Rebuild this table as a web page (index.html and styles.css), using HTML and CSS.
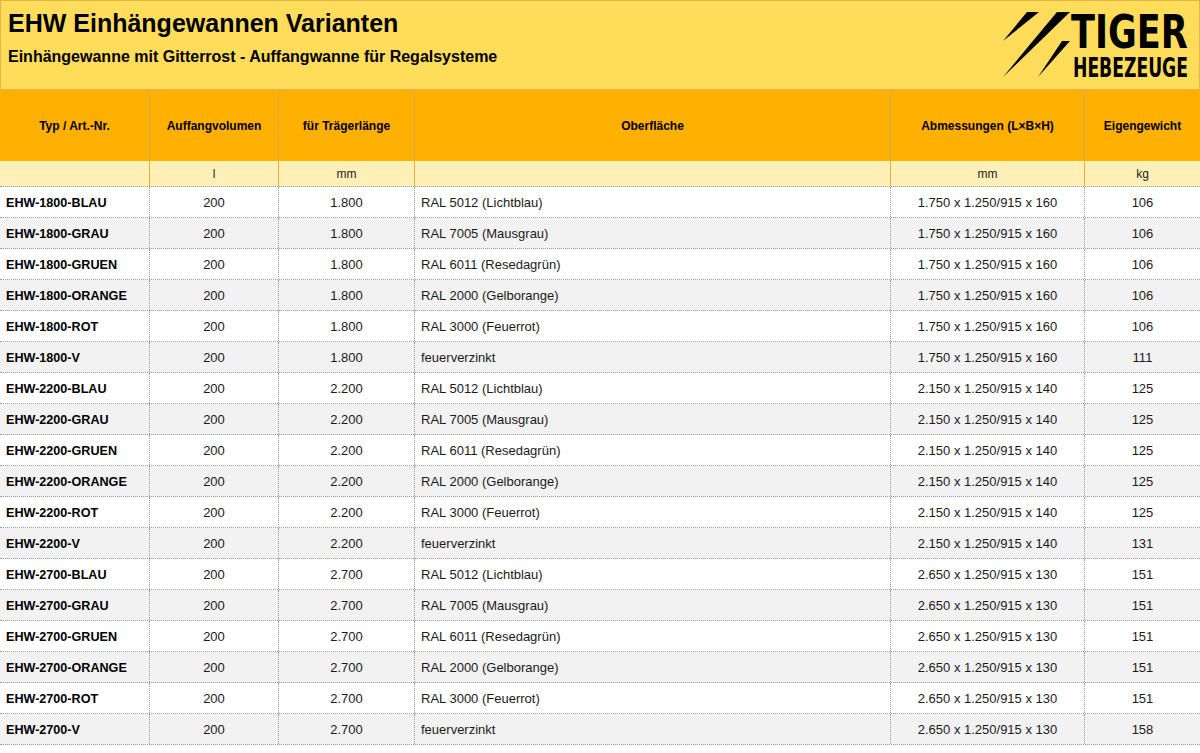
FILE: index.html
```html
<!DOCTYPE html>
<html lang="de">
<head>
<meta charset="utf-8">
<title>EHW Einhängewannen Varianten</title>
<link rel="stylesheet" href="styles.css">
</head>
<body>
<div class="sheet">
  <header class="banner">
    <div class="titles">
      <h1 class="title">EHW Einhängewannen Varianten</h1>
      <p class="subtitle">Einhängewanne mit Gitterrost - Auffangwanne für Regalsysteme</p>
    </div>
    <svg class="logo" width="192" height="86" viewBox="0 0 192 86" aria-label="Tiger Hebezeuge">
      <polygon points="27,11 39,11 3,40" fill="#000"/>
      <polygon points="57,11 70,11 3,76" fill="#000"/>
      <polygon points="62,40 70,40 38,76" fill="#000"/>
      <text class="logo-big" transform="translate(71 47) scale(0.83 1)" x="0" y="0">TIGER</text>
      <text class="logo-small" transform="translate(73 76) scale(0.735 1)" x="0" y="0">HEBEZEUGE</text>
    </svg>
  </header>

  <div class="table">
    <div class="row head">
      <div class="cell">Typ / Art.-Nr.</div>
      <div class="cell">Auffangvolumen</div>
      <div class="cell">für Trägerlänge</div>
      <div class="cell">Oberfläche</div>
      <div class="cell">Abmessungen (L×B×H)</div>
      <div class="cell">Eigengewicht</div>
    </div>
    <div class="row units">
      <div class="cell"></div>
      <div class="cell">l</div>
      <div class="cell">mm</div>
      <div class="cell"></div>
      <div class="cell">mm</div>
      <div class="cell">kg</div>
    </div>

    <div class="row data"><div class="cell id">EHW-1800-BLAU</div><div class="cell">200</div><div class="cell">1.800</div><div class="cell txt">RAL 5012 (Lichtblau)</div><div class="cell">1.750 x 1.250/915 x 160</div><div class="cell">106</div></div>
    <div class="row data"><div class="cell id">EHW-1800-GRAU</div><div class="cell">200</div><div class="cell">1.800</div><div class="cell txt">RAL 7005 (Mausgrau)</div><div class="cell">1.750 x 1.250/915 x 160</div><div class="cell">106</div></div>
    <div class="row data"><div class="cell id">EHW-1800-GRUEN</div><div class="cell">200</div><div class="cell">1.800</div><div class="cell txt">RAL 6011 (Resedagrün)</div><div class="cell">1.750 x 1.250/915 x 160</div><div class="cell">106</div></div>
    <div class="row data"><div class="cell id">EHW-1800-ORANGE</div><div class="cell">200</div><div class="cell">1.800</div><div class="cell txt">RAL 2000 (Gelborange)</div><div class="cell">1.750 x 1.250/915 x 160</div><div class="cell">106</div></div>
    <div class="row data"><div class="cell id">EHW-1800-ROT</div><div class="cell">200</div><div class="cell">1.800</div><div class="cell txt">RAL 3000 (Feuerrot)</div><div class="cell">1.750 x 1.250/915 x 160</div><div class="cell">106</div></div>
    <div class="row data"><div class="cell id">EHW-1800-V</div><div class="cell">200</div><div class="cell">1.800</div><div class="cell txt">feuerverzinkt</div><div class="cell">1.750 x 1.250/915 x 160</div><div class="cell">111</div></div>

    <div class="row data"><div class="cell id">EHW-2200-BLAU</div><div class="cell">200</div><div class="cell">2.200</div><div class="cell txt">RAL 5012 (Lichtblau)</div><div class="cell">2.150 x 1.250/915 x 140</div><div class="cell">125</div></div>
    <div class="row data"><div class="cell id">EHW-2200-GRAU</div><div class="cell">200</div><div class="cell">2.200</div><div class="cell txt">RAL 7005 (Mausgrau)</div><div class="cell">2.150 x 1.250/915 x 140</div><div class="cell">125</div></div>
    <div class="row data"><div class="cell id">EHW-2200-GRUEN</div><div class="cell">200</div><div class="cell">2.200</div><div class="cell txt">RAL 6011 (Resedagrün)</div><div class="cell">2.150 x 1.250/915 x 140</div><div class="cell">125</div></div>
    <div class="row data"><div class="cell id">EHW-2200-ORANGE</div><div class="cell">200</div><div class="cell">2.200</div><div class="cell txt">RAL 2000 (Gelborange)</div><div class="cell">2.150 x 1.250/915 x 140</div><div class="cell">125</div></div>
    <div class="row data"><div class="cell id">EHW-2200-ROT</div><div class="cell">200</div><div class="cell">2.200</div><div class="cell txt">RAL 3000 (Feuerrot)</div><div class="cell">2.150 x 1.250/915 x 140</div><div class="cell">125</div></div>
    <div class="row data"><div class="cell id">EHW-2200-V</div><div class="cell">200</div><div class="cell">2.200</div><div class="cell txt">feuerverzinkt</div><div class="cell">2.150 x 1.250/915 x 140</div><div class="cell">131</div></div>

    <div class="row data"><div class="cell id">EHW-2700-BLAU</div><div class="cell">200</div><div class="cell">2.700</div><div class="cell txt">RAL 5012 (Lichtblau)</div><div class="cell">2.650 x 1.250/915 x 130</div><div class="cell">151</div></div>
    <div class="row data"><div class="cell id">EHW-2700-GRAU</div><div class="cell">200</div><div class="cell">2.700</div><div class="cell txt">RAL 7005 (Mausgrau)</div><div class="cell">2.650 x 1.250/915 x 130</div><div class="cell">151</div></div>
    <div class="row data"><div class="cell id">EHW-2700-GRUEN</div><div class="cell">200</div><div class="cell">2.700</div><div class="cell txt">RAL 6011 (Resedagrün)</div><div class="cell">2.650 x 1.250/915 x 130</div><div class="cell">151</div></div>
    <div class="row data"><div class="cell id">EHW-2700-ORANGE</div><div class="cell">200</div><div class="cell">2.700</div><div class="cell txt">RAL 2000 (Gelborange)</div><div class="cell">2.650 x 1.250/915 x 130</div><div class="cell">151</div></div>
    <div class="row data"><div class="cell id">EHW-2700-ROT</div><div class="cell">200</div><div class="cell">2.700</div><div class="cell txt">RAL 3000 (Feuerrot)</div><div class="cell">2.650 x 1.250/915 x 130</div><div class="cell">151</div></div>
    <div class="row data"><div class="cell id">EHW-2700-V</div><div class="cell">200</div><div class="cell">2.700</div><div class="cell txt">feuerverzinkt</div><div class="cell">2.650 x 1.250/915 x 130</div><div class="cell">158</div></div>
  </div>
</div>
</body>
</html>
```

FILE: styles.css
```css
html, body {
  margin: 0;
  padding: 0;
  background: #ffffff;
}

body {
  font-family: "Liberation Sans", Arial, sans-serif;
  color: #111111;
}

.sheet {
  width: 1200px;
}

/* ---------- banner ---------- */
.banner {
  box-sizing: border-box;
  height: 90px;
  background: #ffdc5a;
  border: 1px solid #e2b447;
  display: flex;
  justify-content: space-between;
  align-items: flex-start;
  padding: 7px 7px 0 7px;
}

.titles {
  display: flex;
  flex-direction: column;
}

.title {
  margin: 0;
  font-size: 25px;
  line-height: 30px;
  font-weight: bold;
  color: #000;
}

.subtitle {
  margin: 9px 0 0 0;
  font-size: 16px;
  line-height: 20px;
  font-weight: bold;
  color: #000;
}

.logo {
  display: block;
  margin-top: -7px;
  overflow: visible;
}

.logo-big,
.logo-small {
  font-family: "DejaVu Sans Condensed", "DejaVu Sans", sans-serif;
  font-weight: bold;
  fill: #000;
}

.logo-big {
  font-size: 47px;
}

.logo-small {
  font-size: 26px;
}

/* ---------- table ---------- */
.table {
  display: flex;
  flex-direction: column;
}

.row {
  box-sizing: border-box;
  display: grid;
  grid-template-columns: 150px 129px 136px 476px 194px 115px;
}

.cell {
  box-sizing: border-box;
  display: flex;
  align-items: center;
  justify-content: center;
  white-space: nowrap;
  overflow: hidden;
}

.head {
  height: 71px;
  background: #ffb000;
}

.head .cell {
  font-size: 12px;
  font-weight: bold;
  color: #000;
  border-right: 1px solid #d9a94f;
}

.units {
  height: 26px;
  background: #fff0b8;
  border-bottom: 1px dotted #9a9a9a;
}

.units .cell {
  font-size: 12px;
  color: #222;
  border-right: 1px solid #e9ad2c;
}

.head .cell:last-child,
.units .cell:last-child,
.data .cell:last-child {
  border-right: none;
}

.data {
  height: 31px;
  border-bottom: 1px dotted #9a9a9a;
  background: #ffffff;
}

.data:nth-child(even) {
  background: #f2f2f2;
}

.data .cell {
  font-size: 13px;
  color: #1a1a1a;
  border-right: 1px dotted #9a9a9a;
  padding-top: 1px;
}

.data .cell.id {
  justify-content: flex-start;
  padding-left: 6px;
  padding-top: 2px;
  font-weight: bold;
  font-size: 12.6px;
  color: #000;
}

.data .cell.txt {
  justify-content: flex-start;
  padding-left: 6px;
}
```
